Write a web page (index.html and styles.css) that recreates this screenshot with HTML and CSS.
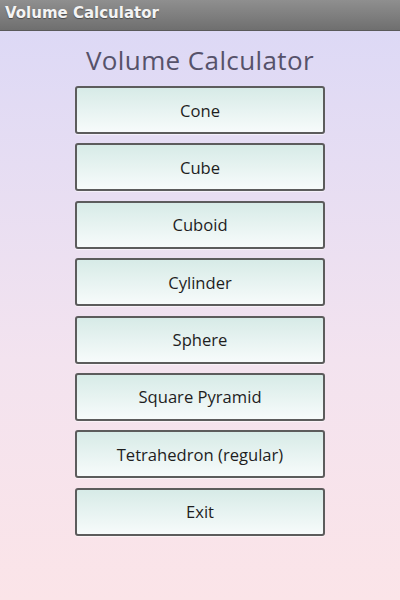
FILE: index.html
```html
<!DOCTYPE html>
<html lang="en">
<head>
  <meta charset="UTF-8" />
  <meta name="viewport" content="width=device-width, initial-scale=1" />
  <title>Volume Calculator</title>
  <link rel="stylesheet" href="styles.css">
</head>
<body>
  <div class="titlebar">Volume Calculator</div>

  <div class="main">
    <h1>Volume Calculator</h1>
    <div class="menu-list">
      <button>Cone</button>
      <button>Cube</button>
      <button>Cuboid</button>
      <button>Cylinder</button>
      <button>Sphere</button>
      <button>Square Pyramid</button>
      <button>Tetrahedron (regular)</button>
      <button>Exit</button>
    </div>
  </div>
</body>
</html>
```

FILE: styles.css
```css
/* Reset */
* {
  box-sizing: border-box;
}

body {
  margin: 0;
  height: 600px;
  font-family: 'Open Sans', 'DejaVu Sans', sans-serif;
  background: linear-gradient(to bottom, #dbd8f6, #f3e3ef 60%, #fbe4e8);
  overflow: hidden;
}

/* Title bar */
.titlebar {
  height: 31px;
  padding: 4px 0 0 5px;
  background: linear-gradient(to bottom, #8f8f8f, #6f6f6f);
  border-bottom: 1px solid #5a5a5a;
  color: #f4f4f4;
  font-family: 'DejaVu Sans', sans-serif;
  font-weight: bold;
  font-size: 15px;
  text-shadow: 0 1px 1px rgba(0,0,0,0.4);
}

/* Main */
.main {
  display: flex;
  flex-direction: column;
  align-items: center;
}
h1 {
  margin: 11px 0 0;
  height: 44px;
  font-weight: normal;
  font-size: 26px;
  color: #56526a;
  letter-spacing: 0.4px;
}

.menu-list {
  display: flex;
  flex-direction: column;
  gap: 9.4px;
}
.menu-list button {
  width: 250px;
  height: 48px;
  border: 2px solid #5c5c5c;
  border-radius: 3px;
  background: linear-gradient(to bottom, #d7ebe7, #f7fbfb);
  color: #1e1e1e;
  font-family: 'Open Sans', 'DejaVu Sans', sans-serif;
  font-size: 16.6px;
  padding: 0;
  box-shadow: 0 1px 1px rgba(255,255,255,0.6);
}
```
